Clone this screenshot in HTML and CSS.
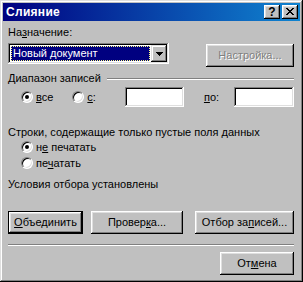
FILE: index.html
```html
<!DOCTYPE html>
<html lang="ru">
<head>
<meta charset="utf-8">
<title>Слияние</title>
<link rel="stylesheet" href="styles.css">
</head>
<body>
<div class="window">
  <div class="titlebar">
    <span class="title">Слияние</span>
    <div class="tbtns">
      <span class="tbtn help">?</span>
      <span class="tbtn close"><svg width="8" height="7" viewBox="0 0 8 7"><path d="M0 0h2v1h1v1h2v-1h1v-1h2v1h-1v1h-1v1h-1v1h1v1h1v1h1v1h-2v-1h-1v-1h-2v1h-1v1h-2v-1h1v-1h1v-1h1v-1h-1v-1h-1v-1h-1z" fill="#000"/></svg></span>
    </div>
  </div>
  <div class="content">
    <div class="label l-dest">На<u>з</u>начение:</div>
    <div class="row r-dest">
      <div class="combo">
        <div class="combo-sel"><span class="focus">Новый документ</span></div>
        <div class="combo-btn"><svg width="7" height="4" viewBox="0 0 7 4"><path d="M0 0h7v1h-1v1h-1v1h-1v1h-1v-1h-1v-1h-1v-1h-1z" fill="#000"/></svg></div>
      </div>
      <div class="btn disabled b-setup">Настройка...</div>
    </div>
    <div class="group"><span class="group-title">Диапазон записей</span><span class="etch"></span></div>
    <div class="row r-range">
      <div class="opt o-all"><span class="radio on"></span><span><u>в</u>се</span></div>
      <div class="opt o-from"><span class="radio"></span><span><u>с</u>:</span></div>
      <div class="field f-from"></div>
      <span class="to-label"><u>п</u>о:</span>
      <div class="field f-to"></div>
    </div>
    <div class="label l-rows">Строки, содержащие только пустые поля данных</div>
    <div class="opt o-line"><span class="radio on"></span><span>н<u>е</u> печатать</span></div>
    <div class="opt o-line"><span class="radio"></span><span>пе<u>ч</u>атать</span></div>
    <div class="label l-cond">Условия отбора установлены</div>
    <div class="row r-actions">
      <div class="btn default b-merge"><u>О</u>бъединить</div>
      <div class="btn b-check">Провер<u>к</u>а...</div>
      <div class="btn b-query">Отбор за<u>п</u>исей...</div>
    </div>
    <div class="separator"></div>
    <div class="row r-cancel">
      <div class="btn b-cancel">От<u>м</u>ена</div>
    </div>
  </div>
</div>
</body>
</html>
```
FILE: styles.css
```css
html, body {
  margin: 0;
  padding: 0;
  background: #c0c0c0;
}
.window {
  width: 303px;
  height: 282px;
  box-sizing: border-box;
  padding: 3px;
  background: #c0c0c0;
  box-shadow: inset -1px -1px #000, inset 1px 1px #dfdfdf, inset -2px -2px #808080, inset 2px 2px #fff;
  font-family: "Liberation Sans", Arial, sans-serif;
  font-size: 11px;
  color: #000;
}
u { text-decoration: underline; text-underline-offset: 1px; }
.titlebar {
  height: 18px;
  background: linear-gradient(90deg, #000080, #1084d0);
  display: flex;
  align-items: center;
  justify-content: space-between;
  padding: 0 2px 0 3px;
}
.title {
  color: #fff;
  font-weight: bold;
  font-size: 12px;
  letter-spacing: 0.3px;
}
.tbtns { display: flex; gap: 2px; }
.tbtn {
  width: 16px;
  height: 14px;
  box-sizing: border-box;
  background: #c0c0c0;
  box-shadow: inset -1px -1px #000, inset 1px 1px #fff, inset -2px -2px #808080, inset 2px 2px #dfdfdf;
  display: flex;
  align-items: center;
  justify-content: center;
  font-weight: bold;
  font-size: 12px;
  line-height: 14px;
}
.tbtn.help { padding-bottom: 1px; }
.tbtn.close svg { margin-top: -1px; }
.content {
  padding: 0 6px 0 5px;
  display: flex;
  flex-direction: column;
}
.label { line-height: 13px; height: 13px; white-space: nowrap; }
.l-dest { margin-top: 5px; }
.row { display: flex; align-items: flex-start; }
.r-dest { margin-top: 4px; justify-content: space-between; }
.combo {
  width: 161px;
  height: 21px;
  box-sizing: border-box;
  padding: 2px;
  background: #fff;
  box-shadow: inset -1px -1px #fff, inset 1px 1px #808080, inset -2px -2px #dfdfdf, inset 2px 2px #000;
  display: flex;
}
.combo-sel {
  flex: 1;
  padding: 1px;
}
.focus {
  display: block;
  height: 15px;
  box-sizing: border-box;
  background: #000080;
  color: #fff;
  outline: 1px dotted #ffff80;
  outline-offset: -1px;
  padding-left: 2px;
  line-height: 14px;
}
.combo-btn {
  width: 16px;
  height: 17px;
  box-sizing: border-box;
  background: #c0c0c0;
  box-shadow: inset -1px -1px #000, inset 1px 1px #dfdfdf, inset -2px -2px #808080, inset 2px 2px #fff;
  display: flex;
  align-items: center;
  justify-content: center;
}
.btn {
  height: 23px;
  box-sizing: border-box;
  background: #c0c0c0;
  box-shadow: inset -1px -1px #000, inset 1px 1px #fff, inset -2px -2px #808080, inset 2px 2px #dfdfdf;
  display: flex;
  align-items: center;
  justify-content: center;
  white-space: nowrap;
  line-height: 13px;
}
.btn.default {
  box-shadow: inset 0 0 0 1px #000, inset -2px -2px #000, inset 2px 2px #fff, inset -3px -3px #808080, inset 3px 3px #dfdfdf;
}
.btn.disabled {
  color: #808080;
  text-shadow: 1px 1px #fff;
}
.b-setup { width: 88px; margin-top: 1px; }
.group {
  margin-top: 5px;
  height: 13px;
  display: flex;
  align-items: center;
}
.group-title { line-height: 13px; white-space: nowrap; }
.etch {
  flex: 1;
  margin-left: 6px;
  height: 0;
  border-top: 1px solid #808080;
  border-bottom: 1px solid #fff;
}
.r-range { margin-top: 2px; align-items: center; height: 20px; }
.opt { display: flex; align-items: center; gap: 3px; line-height: 13px; }
.radio {
  width: 12px;
  height: 12px;
  box-sizing: border-box;
  border-radius: 50%;
  background: #fff;
  border: 1px solid;
  border-color: #808080 #fff #fff #808080;
  box-shadow: inset 1px 1px #000, inset -1px -1px #dfdfdf;
  position: relative;
}
.radio.on::after {
  content: "";
  position: absolute;
  left: 3px;
  top: 3px;
  width: 4px;
  height: 4px;
  border-radius: 50%;
  background: #000;
}
.o-all { margin-left: 13px; }
.o-from { margin-left: 19px; }
.field {
  height: 20px;
  box-sizing: border-box;
  background: #fff;
  box-shadow: inset -1px -1px #fff, inset 1px 1px #808080, inset -2px -2px #dfdfdf, inset 2px 2px #000;
}
.f-from { width: 59px; margin-left: 29px; }
.to-label { margin-left: 20px; line-height: 13px; }
.f-to { width: 60px; margin-left: auto; }
.l-rows { margin-top: 19px; }
.o-line { margin-left: 13px; height: 16px; }
.l-cond { margin-top: 7px; }
.r-actions { margin-top: 20px; }
.b-merge { width: 75px; }
.b-check { width: 92px; margin-left: 8px; }
.b-query { width: 99px; margin-left: 12px; }
.separator {
  margin-top: 10px;
  height: 0;
  border-top: 1px solid #808080;
  border-bottom: 1px solid #fff;
}
.r-cancel { margin-top: 6px; justify-content: flex-end; }
.b-cancel { width: 74px; }
```
